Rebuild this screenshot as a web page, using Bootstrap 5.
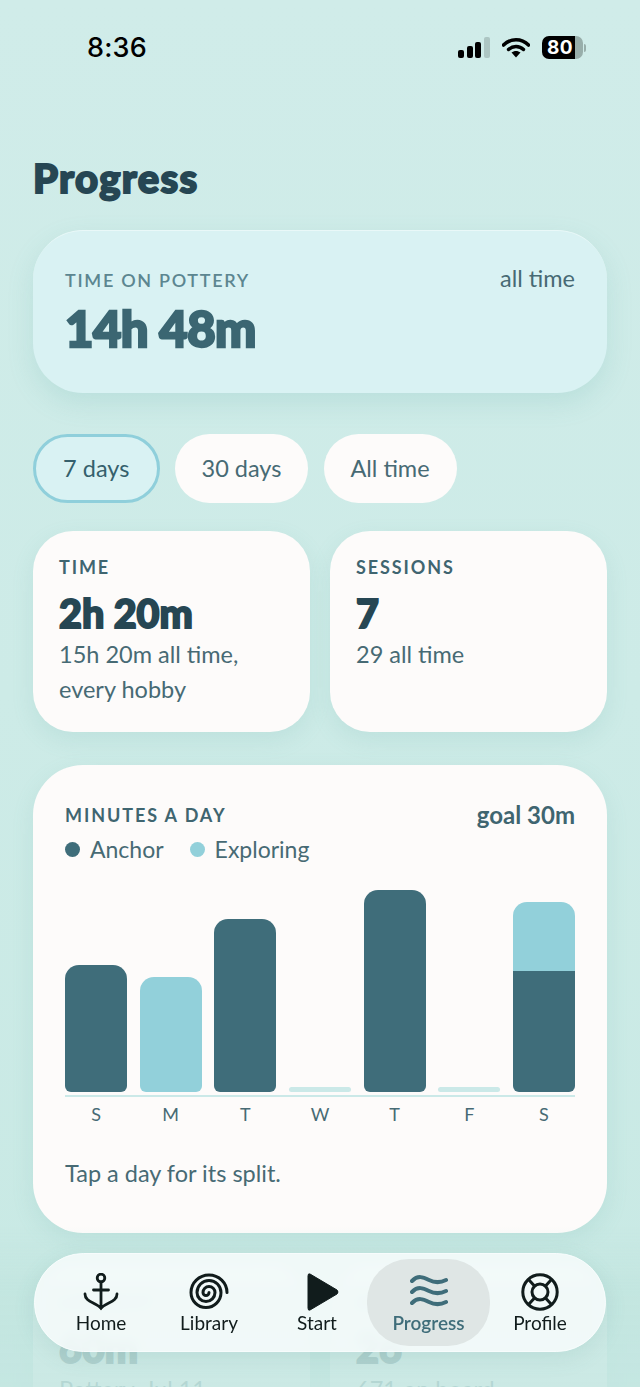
<!DOCTYPE html>
<html lang="en">
<head>
    <meta charset="UTF-8">
    <meta name="viewport" content="width=device-width, initial-scale=1.0">
    <title>Progress</title>
    <link rel="stylesheet" href="https://cdn.jsdelivr.net/npm/bootstrap@5.3.0/dist/css/bootstrap.min.css">
    <style>
        html, body {
            height: 1387px;
            overflow: hidden;
        }

        body {
            background: linear-gradient(180deg, #d0ece9 0%, #cdebe7 50%, #c8e9e4 100%);
            font-family: "Lato", "Noto Sans", sans-serif;
            color: #3c5f69;
        }

        .status-bar {
            height: 139px;
            padding: 31px 54px 0 87px;
            color: #000;
        }

        .status-time {
            font-family: "Inter", sans-serif;
            font-weight: 500;
            font-size: 27px;
            line-height: 34px;
            letter-spacing: .2px;
        }

        .status-icons {
            gap: 12px;
            margin-top: 5px;
        }

        .battery {
            width: 41px;
            height: 23px;
            border-radius: 7px;
            background: linear-gradient(90deg, #000 0, #000 81%, #98aeaa 81%);
            color: #fff;
            font-family: "Inter", sans-serif;
            font-weight: 700;
            font-size: 19px;
            line-height: 23px;
            padding-left: 5px;
            letter-spacing: .5px;
        }

        .battery-nub {
            width: 2px;
            height: 8px;
            margin-left: 1px;
            background: #98aeaa;
            border-radius: 0 2px 2px 0;
        }

        .page-body {
            padding: 0 33px;
        }

        .page-title, .big-value {
            font-family: "Lato", sans-serif;
            font-weight: 900;
            -webkit-text-stroke: 1.9px currentColor;
            paint-order: stroke fill;
        }

        .page-title {
            font-size: 40px;
            line-height: 46px;
            margin: 0 0 29px;
            padding-top: 16px;
            color: #264653;
            letter-spacing: 1.3px;
        }

        .soft-card {
            border: 0;
            background: #fdfbfa;
            box-shadow: 0 8px 22px rgba(96, 170, 165, .14);
        }

        .hero-card {
            height: 163px;
            padding: 36px 32px 0;
            border-radius: 50px;
            background: #d9f2f3;
            border: 0;
            border-top: 1px solid #e9f8f8;
            box-shadow: 0 10px 26px rgba(96, 170, 165, .18);
            margin-bottom: 41px;
        }

        .cap-label {
            font-size: 18px;
            font-weight: 700;
            letter-spacing: 1.9px;
            line-height: 26px;
            text-transform: uppercase;
            color: #3f6570;
        }

        .hero-card .cap-label {
            color: #5c8690;
            font-weight: 600;
            letter-spacing: 1.7px;
        }

        .side-note {
            font-size: 23.5px;
            line-height: 26px;
            margin-top: -2px;
            color: #476a74;
        }

        .hero-value {
            font-size: 49px;
            line-height: 54px;
            margin-top: 8px;
            color: #3b6672;
            -webkit-text-stroke-width: 2.4px;
            letter-spacing: -.5px;
        }

        .chip-row {
            gap: 15.5px;
            margin-bottom: 28px;
        }

        .chip-btn {
            height: 69px;
            min-width: 133px;
            padding: 0 26px;
            border: 0;
            border-radius: 35px;
            background: #fdfbfa;
            font-size: 23.5px;
            color: #476a74;
        }

        .chip-btn.is-on {
            min-width: 126.5px;
            width: 126.5px;
            padding: 0 20px;
            background: #d9f2f3;
            border: 3px solid #8fcfdb;
            color: #35606c;
        }

        .stat-row {
            gap: 20px;
            margin-bottom: 33px;
        }

        .stat-card {
            flex: 1 1 0;
            height: 201px;
            padding: 23px 26px 0;
            border-radius: 40px;
        }

        .stat-value {
            font-size: 39.5px;
            line-height: 44px;
            margin-top: 11px;
            color: #264653;
        }

        .stat-sub {
            font-size: 23.5px;
            line-height: 35px;
            color: #476a74;
            margin-top: 2px;
        }

        .chart-card {
            height: 468px;
            padding: 37px 32px 0;
            border-radius: 50px;
            margin-bottom: 33px;
        }

        .goal-note {
            font-weight: 700;
            margin-top: 0;
            font-size: 24px;
            color: #3f6570;
        }

        .legend-row {
            gap: 26px;
            font-size: 23px;
            line-height: 30px;
            margin-top: 6px;
            color: #476a74;
        }

        .legend-dot {
            width: 15px;
            height: 15px;
            border-radius: 50%;
            margin-right: 10px;
            background: #3f6d7a;
        }

        .legend-dot.light {
            background: #92d0da;
        }

        .bar-area {
            height: 214px;
            margin-top: 14px;
            gap: 12.6px;
        }

        .bar-col {
            flex: 1 1 0;
        }

        .bar-top, .bar-base {
            background: #3f6d7a;
        }

        .bar-col > :first-child {
            border-radius: 14px 14px 0 0;
        }

        .bar-col > :last-child {
            border-radius: 0 0 6px 6px;
        }

        .bar-col > :only-child {
            border-radius: 14px 14px 6px 6px;
        }

        .bar-top.light {
            background: #92d0da;
        }

        .bar-stub {
            background: #cbe9e8;
            border-radius: 3px !important;
        }

        .axis-line {
            height: 2px;
            margin-top: 3px;
            background: #cbe9e8;
        }

        .day-row {
            gap: 12.6px;
            margin-top: 5px;
            font-size: 18px;
            line-height: 24px;
            color: #476a74;
        }

        .day-row span {
            flex: 1 1 0;
            text-align: center;
        }

        .hint-text {
            font-size: 23.5px;
            line-height: 30px;
            margin-top: 32px;
            color: #476a74;
        }

        .bottom-fade {
            position: fixed;
            left: 0;
            right: 0;
            bottom: 0;
            height: 160px;
            background: linear-gradient(180deg, rgba(194, 229, 223, 0) 0%, rgba(194, 229, 223, .84) 40%, rgba(196, 230, 225, .88) 100%);
            pointer-events: none;
        }

        .tab-bar {
            position: fixed;
            left: 34px;
            top: 1253px;
            width: 572px;
            height: 99px;
            padding: 5px 16px;
            border-radius: 50px;
            background: rgba(247, 252, 252, .86);
            border: 1px solid #f7fcfc;
            box-shadow: 0 6px 22px rgba(70, 140, 135, .12);
            backdrop-filter: blur(6px);
        }

        .tab-item {
            flex: none;
            width: 100px;
            height: 87px;
            padding-top: 14px;
            border-radius: 42px;
            font-size: 19px;
            line-height: 22px;
            color: #111c1c;
            text-align: center;
        }

        .tab-item svg {
            display: block;
            height: 38px;
            margin: 0 auto 1px;
        }

        .tab-wide {
            width: 116px;
        }

        /* play triangle sits right of its label in the reference */
        .tab-start svg {
            margin-left: 40px;
        }

        .tab-item.is-on {
            width: 123px;
            background: #dfe6e5;
            color: #3f6d7a;
            font-weight: 600;
        }
    </style>
</head>
<body>

    <div class="status-bar d-flex justify-content-between">
        <div class="status-time">8:36</div>
        <div class="status-icons d-flex align-items-center align-self-start">
            <svg width="32" height="21" viewBox="0 0 32 21">
                <rect x="0" y="13" width="6" height="8" rx="2" fill="#000"/>
                <rect x="9" y="9" width="6" height="12" rx="2" fill="#000"/>
                <rect x="17" y="5" width="6" height="16" rx="2" fill="#000"/>
                <rect x="26" y="0" width="6" height="21" rx="2" fill="#adc6c3"/>
            </svg>
            <svg width="28" height="21" viewBox="0 0 28 21">
                <path d="M1.5 8 C8.5 1 19.5 1 26.5 8" fill="none" stroke="#000" stroke-width="3.6" stroke-linecap="round"/>
                <path d="M6.5 12.5 C10.5 8.5 17.5 8.5 21.5 12.5" fill="none" stroke="#000" stroke-width="3.4" stroke-linecap="round"/>
                <path d="M9.5 15.6 C12 13.4 16 13.4 18.5 15.6 L14 20.5 Z" fill="#000"/>
            </svg>
            <div class="d-flex align-items-center">
                <div class="battery">80</div>
                <div class="battery-nub"></div>
            </div>
        </div>
    </div>

    <div class="page-body">
        <h1 class="page-title">Progress</h1>

        <div class="card hero-card">
            <div class="d-flex justify-content-between">
                <div class="cap-label">Time on pottery</div>
                <div class="side-note">all time</div>
            </div>
            <div class="big-value hero-value">14h 48m</div>
        </div>

        <div class="chip-row d-flex">
            <button class="btn chip-btn is-on" type="button">7 days</button>
            <button class="btn chip-btn" type="button">30 days</button>
            <button class="btn chip-btn" type="button">All time</button>
        </div>

        <div class="stat-row d-flex">
            <div class="card soft-card stat-card">
                <div class="cap-label">Time</div>
                <div class="big-value stat-value">2h 20m</div>
                <div class="stat-sub">15h 20m all time,<br>every hobby</div>
            </div>
            <div class="card soft-card stat-card">
                <div class="cap-label">Sessions</div>
                <div class="big-value stat-value">7</div>
                <div class="stat-sub">29 all time</div>
            </div>
        </div>

        <div class="card soft-card chart-card">
            <div class="d-flex justify-content-between">
                <div class="cap-label">Minutes a day</div>
                <div class="side-note goal-note">goal 30m</div>
            </div>
            <div class="legend-row d-flex">
                <div class="d-flex align-items-center"><span class="legend-dot"></span>Anchor</div>
                <div class="d-flex align-items-center"><span class="legend-dot light"></span>Exploring</div>
            </div>
            <div class="bar-area d-flex align-items-end">
                <div class="bar-col"><div class="bar-base" style="height: 127px"></div></div>
                <div class="bar-col"><div class="bar-top light" style="height: 115px"></div></div>
                <div class="bar-col"><div class="bar-base" style="height: 173px"></div></div>
                <div class="bar-col"><div class="bar-stub" style="height: 5px"></div></div>
                <div class="bar-col"><div class="bar-base" style="height: 202px"></div></div>
                <div class="bar-col"><div class="bar-stub" style="height: 5px"></div></div>
                <div class="bar-col"><div class="bar-top light" style="height: 69px"></div><div class="bar-base" style="height: 121px"></div></div>
            </div>
            <div class="axis-line"></div>
            <div class="day-row d-flex">
                <span>S</span><span>M</span><span>T</span><span>W</span><span>T</span><span>F</span><span>S</span>
            </div>
            <div class="hint-text">Tap a day for its split.</div>
        </div>

        <div class="stat-row d-flex">
            <div class="card soft-card stat-card">
                <div class="cap-label">Longest</div>
                <div class="big-value stat-value">60m</div>
                <div class="stat-sub">Pottery, Jul 11</div>
            </div>
            <div class="card soft-card stat-card">
                <div class="cap-label">Average</div>
                <div class="big-value stat-value">26</div>
                <div class="stat-sub">671 on board</div>
            </div>
        </div>
    </div>

    <div class="bottom-fade"></div>

    <!-- bottom tabs -->
    <nav class="tab-bar d-flex">
        <div class="tab-item">
            <svg width="36" height="38" viewBox="0 0 36 38" fill="none" stroke="#111c1c" stroke-width="2.8" stroke-linecap="round">
                <circle cx="18" cy="5" r="3.8"/>
                <path d="M18 9 V35"/>
                <path d="M10.5 17 H25.5"/>
                <path d="M2 21 C2 29 12 29 18 35 C24 29 34 29 34 21"/>
                <path d="M15 32 L18 37.5 L21 32 Z" fill="#111c1c" stroke="none"/>
            </svg>
            Home
        </div>
        <div class="tab-item tab-wide">
            <svg width="40" height="38" viewBox="0 0 40 38" fill="none" stroke="#111c1c" stroke-width="3" stroke-linecap="round">
                <path d="M38 19.5 A18 17.5 0 0 0 2 19.5 A15 15 0 0 0 32 19.5 A12 12 0 0 0 8 19.5 A9 9 0 0 0 26 19.5 A6 6 0 0 0 14 19.5 A3 3 0 0 0 20 19.5"/>
            </svg>
            Library
        </div>
        <div class="tab-item tab-start">
            <svg width="32" height="38" viewBox="0 0 32 38">
                <path d="M3 1 L30 17 Q32 19 30 21 L3 37 Q1 38 1 35 V3 Q1 0 3 1 Z" fill="#111c1c" stroke="#111c1c" stroke-width="1" stroke-linejoin="round"/>
            </svg>
            Start
        </div>
        <div class="tab-item is-on">
            <svg width="38" height="38" viewBox="0 0 38 38" fill="none" stroke="#3f6d7a" stroke-width="4" stroke-linecap="round">
                <path d="M2 8 C8 2 13 4 19 7 C25 10 30 10 36 7"/>
                <path d="M2 19 C8 13 13 15 19 18 C25 21 30 21 36 18"/>
                <path d="M2 30 C8 24 13 26 19 29 C25 32 30 32 36 29"/>
            </svg>
            Progress
        </div>
        <div class="tab-item">
            <svg width="38" height="38" viewBox="0 0 38 38" fill="none" stroke="#111c1c" stroke-width="3" stroke-linecap="round">
                <circle cx="19" cy="19" r="17.2"/>
                <circle cx="19" cy="19" r="8"/>
                <path d="M8 7 L13.5 13 M30 7 L24.5 13 M8 31 L13.5 25 M30 31 L24.5 25"/>
            </svg>
            Profile
        </div>
    </nav>

    <script src="https://cdn.jsdelivr.net/npm/bootstrap@5.3.0/dist/js/bootstrap.bundle.min.js"></script>
</body>
</html>
